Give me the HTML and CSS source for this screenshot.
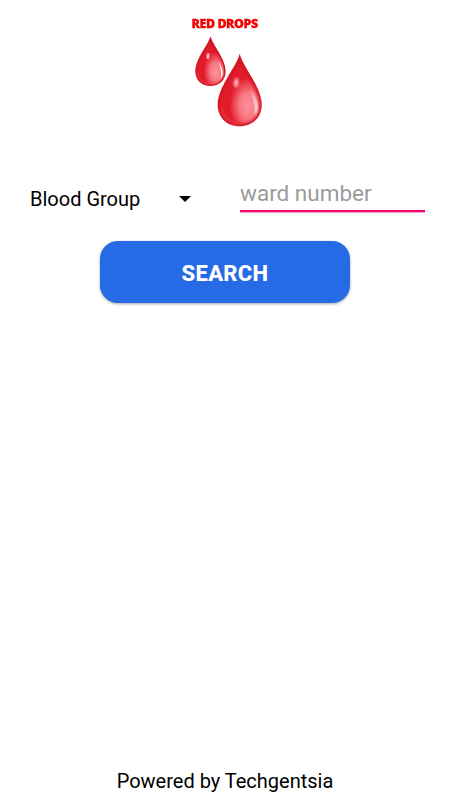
FILE: index.html
```html
<!DOCTYPE html>
<html lang="en">

<head>
    <meta charset="UTF-8">
    <meta name="viewport" content="width=device-width, initial-scale=1.0">
    <title>Red Drops</title>
    <link rel="stylesheet" href="styles.css">
</head>

<body>
    <header class="logo">
        <h1 class="logo-title">RED DROPS</h1>
        <svg class="logo-drops" width="70" height="94" viewBox="0 0 70 94">
            <defs>
                <radialGradient id="shine" cx="0.7" cy="0.7" r="0.45">
                    <stop offset="0" stop-color="#ff929b"></stop>
                    <stop offset="0.45" stop-color="#f87983"></stop>
                    <stop offset="1" stop-color="#e01b29"></stop>
                </radialGradient>
                <filter id="soft" x="-50%" y="-50%" width="200%" height="200%">
                    <feGaussianBlur stdDeviation="0.8"></feGaussianBlur>
                </filter>
                <g id="drop">
                    <path d="M22 0C25 13 44 33 44 51C44 64 34.500 72.500 22 72.500C9.500 72.500 0 64 0 51C0 33 19 13 22 0Z" fill="#d51523"></path>
                    <path d="M22 8C25 17 42 36 42 51C42 63 33 70.500 22 70.500C11 70.500 2 63 2 51C2 36 19 17 22 8Z" fill="url(#shine)" filter="url(#soft)"></path>
                    <path d="M33 36C41 49 41.500 57 37 62C38.500 55 37.500 47 33 36Z" fill="#fff" filter="url(#soft)"></path>
                    <path d="M3.500 54C4.500 62 10 68 18 69.500" fill="none" stroke="#e84a57" stroke-width="1.200" filter="url(#soft)"></path>
                    <ellipse cx="18.500" cy="29" rx="2.300" ry="4.500" fill="#ffb3b7" transform="rotate(8 18.500 29)" filter="url(#soft)"></ellipse>
                </g>
            </defs>
            <use href="#drop" transform="translate(3.300 2) scale(0.69)"></use>
            <use href="#drop" transform="translate(25.700 19.700)"></use>
        </svg>
    </header>
    <main>
        <div class="filters">
            <div class="select">
                <span>Blood Group</span>
                <span class="arrow"></span>
            </div>
            <input class="ward" type="text" placeholder="ward number">
        </div>
        <button class="search">SEARCH</button>
    </main>
    <footer class="footer">Powered by Techgentsia</footer>
</body>

</html>
```

FILE: styles.css
```css
* {
    box-sizing: border-box;
}

body {
    margin: 0;
    height: 800px;
    display: flex;
    flex-direction: column;
    font-family: Roboto, 'Noto Sans', sans-serif;
    font-size: 20px;
    color: #000;
    background-color: #fff;
}

.logo {
    display: flex;
    flex-direction: column;
    align-items: center;
    height: 174px;
    padding-top: 16px;
}

.logo-title {
    margin: 0;
    height: 18px;
    font-family: 'Open Sans', 'Noto Sans', sans-serif;
    font-size: 11.5px;
    font-weight: 800;
    line-height: 16px;
    letter-spacing: -0.4px;
    white-space: nowrap;
    color: #ee0505;
    transform: scaleX(1.08);
    -webkit-text-stroke: 0.3px #ee0505;
}

.logo-drops {
    margin-left: 4px;
}

.filters {
    display: flex;
    align-items: flex-start;
    padding: 0 25px 0 30px;
}

.select {
    display: flex;
    align-items: center;
    justify-content: space-between;
    width: 161px;
    height: 49px;
}

.arrow {
    border-left: 6px solid transparent;
    border-right: 6px solid transparent;
    border-top: 6px solid #000;
}

.ward {
    width: 185px;
    height: 38px;
    margin-left: 49px;
    padding: 2px 0 0;
    border: 0;
    border-bottom: 2px solid #f5086f;
    box-shadow: 0 1px 0 #fba3c8;
    outline: none;
    font-family: inherit;
    font-size: 22.5px;
    background: none;
}

.ward::placeholder {
    color: #9a9a9a;
}

.search {
    display: block;
    width: 250px;
    height: 62px;
    margin: 18px auto 0;
    padding: 2px 0 0;
    border: 0;
    border-radius: 18px;
    font-family: inherit;
    font-size: 22px;
    font-weight: 800;
    letter-spacing: 0.3px;
    color: #fff;
    background-color: #276ae6;
    box-shadow: 0 1px 3px rgba(0, 0, 0, 0.35);
}

.footer {
    margin-top: auto;
    height: 31px;
    line-height: 24px;
    text-align: center;
}
```
